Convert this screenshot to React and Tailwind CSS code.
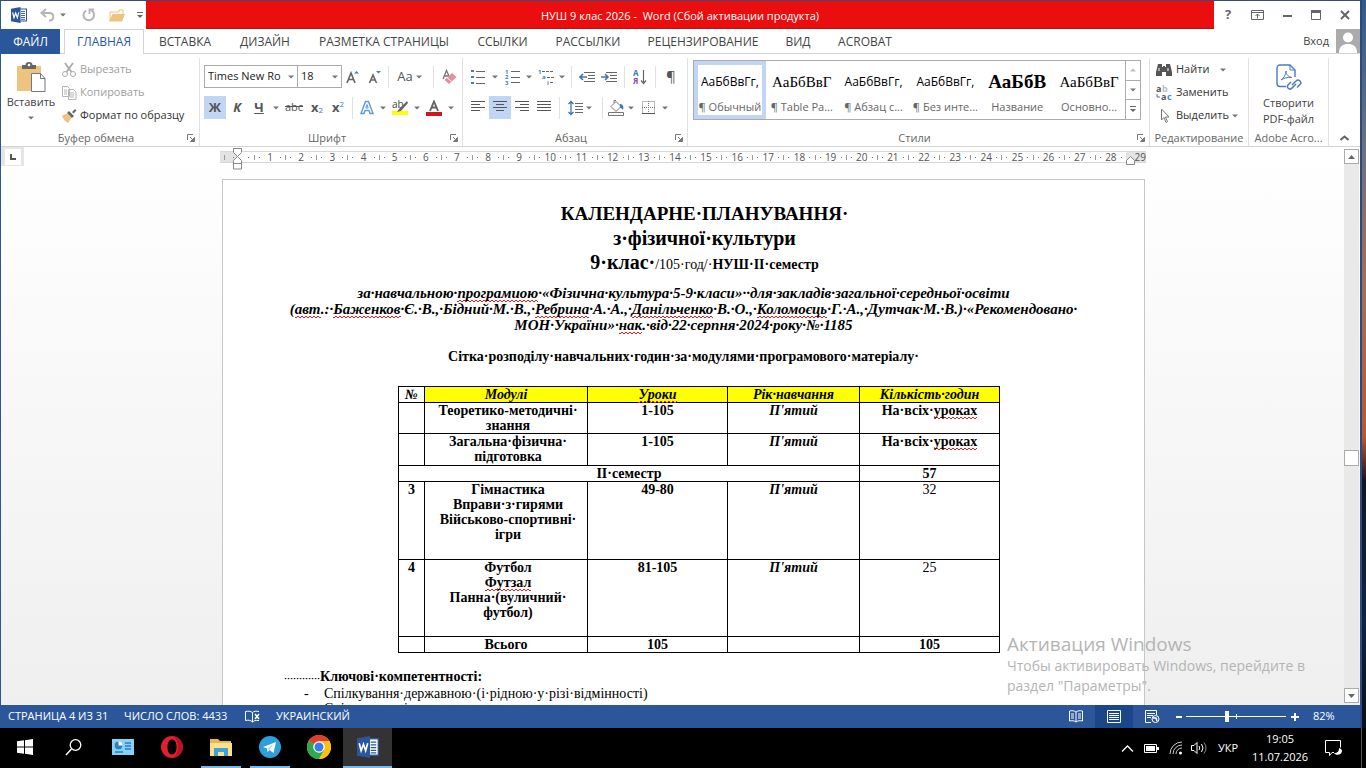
const Svg = ({w = 16, h = 16, children, className = ""}) => (
    <svg width={w} height={h} viewBox={`0 0 ${w} ${h}`} fill="none" className={`shrink-0 ${className}`} aria-hidden="true">
        {children}
    </svg>
)

const Arrow = ({className = "w-3"}) => (
    <span className={`flex justify-center shrink-0 ${className}`}>
        <Svg w={6} h={4}><path d="M0 0.5h6L3 3.5z" fill="#777"/></Svg>
    </span>
)

const Sep = () => <span className="w-px h-[22px] bg-[#e1e1e1] shrink-0"/>

const Tool = ({label, active, className = "w-[22px]", children}) => (
    <button
        type="button"
        aria-label={label}
        className={`h-[23px] flex items-center justify-center shrink-0 ${active ? "bg-[#c2d5f2]" : ""} ${className}`}
    >
        {children}
    </button>
)

const Lines = ({rows}) => (
    <Svg w={14} h={13}>
        {rows.map(([x, w], i) => <rect key={i} x={x} y={i * 3} width={w} height="1" fill="#555"/>)}
    </Svg>
)

const Group = ({title, launcher, className = "", children}) => (
    <section className={`flex flex-col border-r border-[#e1e1e1] mt-1 ${className}`}>
        <div className="h-[73px]">{children}</div>
        <div className="flex items-center h-[14px] px-1 text-[11px] text-[#666]">
            <span className="flex-1 text-center whitespace-nowrap">{title}</span>
            {launcher && (
                <button type="button" aria-label={`${title}: параметры`}>
                    <Svg w={8} h={8}>
                        <path d="M0.5 6V0.5H6" stroke="#777"/>
                        <path d="M3 3l3 3M7.5 3.5v4h-4z" stroke="#777" fill="#777"/>
                    </Svg>
                </button>
            )}
        </div>
    </section>
)

const TABS = [
    {title: "ВСТАВКА", width: "w-[82px]"},
    {title: "ДИЗАЙН", width: "w-[78px]"},
    {title: "РАЗМЕТКА СТРАНИЦЫ", width: "w-40"},
    {title: "ССЫЛКИ", width: "w-[77px]"},
    {title: "РАССЫЛКИ", width: "w-[94px]"},
    {title: "РЕЦЕНЗИРОВАНИЕ", width: "w-[136px]"},
    {title: "ВИД", width: "w-[54px]"},
    {title: "ACROBAT", width: "w-20"},
]

const SANS = "font-['Open_Sans',sans-serif] text-xs"
const SERIF = "font-['Liberation_Serif',serif] text-[15px]"

const STYLES = [
    {sample: "АаБбВвГг,", name: "¶ Обычный", font: SANS, active: true},
    {sample: "АаБбВвГ", name: "¶ Table Pa...", font: SERIF},
    {sample: "АаБбВвГг,", name: "¶ Абзац с...", font: SANS},
    {sample: "АаБбВвГг,", name: "¶ Без инте...", font: SANS},
    {sample: "АаБбВ", name: "Название", font: "font-['Liberation_Serif',serif] text-[19px] font-bold"},
    {sample: "АаБбВвГ", name: "Основно...", font: SERIF},
]

const WordLogo = ({size = 16}) => (
    <svg width={size} height={size} viewBox="0 0 16 16" aria-hidden="true">
        <rect x="8.5" y="2" width="7" height="12" fill="#fff" stroke="#2b579a"/>
        <path d="M10 4.5h4M10 6.5h4M10 8.5h4M10 10.5h4M10 12.3h4" stroke="#2b579a" strokeWidth="0.9"/>
        <path d="M0 1.7L9.5 0v16L0 14.3z" fill="#2b579a"/>
        <path d="M1.6 5.3l1.4 5.4L4.7 6l1.6 4.7 1.5-5.4" stroke="#fff" strokeWidth="1.2" fill="none"/>
    </svg>
)

const TitleBar = () => (
    <header className="flex h-[29px] border-t border-[#3b4a78] text-xs">
        <div className="flex items-center w-[145px] pl-[10px] bg-white">
            <WordLogo/>
            <button type="button" aria-label="Отменить" className="ml-[13px]">
                <Svg w={15} h={14}>
                    <path d="M6 1L1.5 5 6 9M2 5h7.5c5 0 5 7.5 0 7.5H9" stroke="#b5b5b5" strokeWidth="2"/>
                </Svg>
            </button>
            <Arrow className="w-4"/>
            <button type="button" aria-label="Повторить" className="ml-[10px]">
                <Svg w={15} h={14}>
                    <path d="M5 2.5A5.3 5.3 0 1 0 10 2.2" stroke="#b5b5b5" strokeWidth="2"/>
                    <path d="M8.5 6V1.5H13" stroke="#b5b5b5" strokeWidth="1.8"/>
                </Svg>
            </button>
            <button type="button" aria-label="Открыть" className="ml-[13px]">
                <Svg w={16} h={13}>
                    <path d="M1 12V3h9V1h4v5" fill="#fff" stroke="#e9c27c"/>
                    <path d="M0 12.5L3.5 5H16l-3 7.5z" fill="#ecc480"/>
                </Svg>
            </button>
            <button type="button" aria-label="Настройка панели" className="ml-3">
                <Svg w={6} h={7}><path d="M0 0.5h6" stroke="#666"/><path d="M0 3h6L3 6z" fill="#666"/></Svg>
            </button>
        </div>
        <h1 className="flex-1 flex items-center justify-center whitespace-pre bg-[#ea0e0e] border-b border-[#b01515] text-white text-[11px] pt-[3px]">
            {"НУШ 9 клас 2026 -  Word (Сбой активации продукта)"}
        </h1>
        <div className="flex items-center justify-between w-[146px] px-[10px] bg-white">
            <button type="button" aria-label="Справка" className="text-[13px] w-2 font-bold text-[#666]">?</button>
            <button type="button" aria-label="Параметры ленты">
                <Svg w={13} h={10}>
                    <path d="M0.5 0.5h12v9H0.5zM0.5 2.5h12" stroke="#666"/>
                    <path d="M6.5 8.5V4M4.5 6l2-2 2 2" stroke="#666"/>
                </Svg>
            </button>
            <button type="button" aria-label="Свернуть"><Svg w={9} h={10}><path d="M0 6h9" stroke="#666" strokeWidth="2"/></Svg></button>
            <button type="button" aria-label="Развернуть">
                <Svg w={10} h={10}><path d="M0.5 0.5h9v9h-9z" stroke="#666"/><path d="M0 1.5h10" stroke="#666" strokeWidth="3"/></Svg>
            </button>
            <button type="button" aria-label="Закрыть">
                <Svg w={10} h={10}><path d="M1 1l8 8M9 1L1 9" stroke="#666" strokeWidth="2"/></Svg>
            </button>
        </div>
    </header>
)

const TabBar = () => (
    <nav className="flex h-[25px] bg-white text-xs text-[#444]">
        <button type="button" className="w-[59px] pt-px bg-[#2b579a] text-white">ФАЙЛ</button>
        <span className="w-1 border-b border-[#d4d4d4]"/>
        <button type="button" className="w-20 text-[#2b579a] border border-b-0 border-[#d4d4d4]">ГЛАВНАЯ</button>
        {TABS.map((tab) => (
            <button type="button" key={tab.title} className={`pt-[2px] border-b border-[#d4d4d4] whitespace-nowrap ${tab.width}`}>
                {tab.title}
            </button>
        ))}
        <div className="flex-1 flex items-center justify-end gap-[7px] border-b border-[#d4d4d4]">
            <a href="#login" className="text-[11px]">Вход</a>
            <Svg w={24} h={24}>
                <path d="M0 0h24v24H0z" fill="#ababab"/>
                <circle cx="12" cy="8.5" r="5" fill="#fff"/>
                <path d="M3 24c0-7 4-9 9-9s9 2 9 9z" fill="#fff"/>
            </Svg>
        </div>
    </nav>
)

const Clipboard = () => (
    <Group title="Буфер обмена" launcher className="w-[199px]">
        <div className="flex">
            <button type="button" className="flex flex-col items-center w-[60px] pt-1 text-[11px]">
                <Svg w={29} h={30}>
                    <path d="M0 4h24v25H0z" fill="#ecc480"/>
                    <path d="M5 3h3.5a3.5 3 0 0 1 7 0H19v4H5z" fill="#666"/>
                    <circle cx="12" cy="3" r="1.3" fill="#fff"/>
                    <path d="M14.5 11.5h9l4.5 5v13H14.5z" fill="#fff" stroke="#777"/>
                    <path d="M23.5 11.5v5H28" stroke="#777"/>
                </Svg>
                <span className="leading-5">Вставить</span>
                <span className="pt-1"><Arrow/></span>
            </button>
            <div className="flex flex-col text-[11px]">
                <button type="button" className="flex items-center gap-[3px] h-[23px] text-[#a0a0a0]">
                    <Svg>
                        <path d="M4 1l6.5 9M12 1L5.500 10" stroke="#aaa" strokeWidth="1.8"/>
                        <circle cx="4" cy="12" r="2.5" stroke="#aaa"/><circle cx="12" cy="12" r="2.5" stroke="#aaa"/>
                    </Svg>
                    Вырезать
                </button>
                <button type="button" className="flex items-center gap-[3px] h-[23px] text-[#a0a0a0]">
                    <Svg>
                        <path d="M1.5 1.5h5l2 2v8h-7zM7.5 4.5h5l2.5 2.5v7.5H7.5z" fill="#fff" stroke="#b5b5b5"/>
                        <path d="M3 5h3M3 7h3M3 9h3M9 8h4M9 10h4M9 12h4" stroke="#b5b5b5"/>
                    </Svg>
                    Копировать
                </button>
                <button type="button" className="flex items-center gap-[3px] h-[23px] text-[#333]">
                    <Svg>
                        <path d="M1 7.5l5-2 4.5 4.500L7 15C4 13.5 2 11 1 7.5z" fill="#ecc480"/>
                        <path d="M6 5l2-2 5 5-2 2zM11 4l3-3 1.5 1.5-3 3z" fill="#666"/>
                    </Svg>
                    Формат по образцу
                </button>
            </div>
        </div>
    </Group>
)

const FontGroup = () => (
    <Group title="Шрифт" launcher className="w-[263px]">
        <div className="flex items-center h-[23px] mt-[7px] ml-1">
            <div className="flex items-center w-[94px] h-[23px] border border-[#ababab]">
                <input aria-label="Шрифт" defaultValue="Times New Ro" className="min-w-0 flex-1 pl-[3px] text-[11px] text-[#222] outline-none"/>
                <Arrow/>
            </div>
            <div className="flex items-center w-11 h-[23px] border border-l-0 border-[#ababab]">
                <input aria-label="Размер шрифта" defaultValue="18" className="min-w-0 flex-1 pl-[3px] text-[11px] text-[#222] outline-none"/>
                <Arrow/>
            </div>
            <Tool label="Увеличить размер">
                <Svg w={14} h={14}>
                    <path d="M1 13L5 3l4 10M2.5 9.5h5" stroke="#666" strokeWidth="1.6"/><path d="M8 3.5h5L10.5 1z" fill="#4a7ab5"/>
                </Svg>
            </Tool>
            <Tool label="Уменьшить размер">
                <Svg w={14} h={14}>
                    <path d="M1.5 13L5 5l3.500 8M3 10h4.5" stroke="#666" strokeWidth="1.6"/><path d="M8 1h5l-2.5 2.5z" fill="#4a7ab5"/>
                </Svg>
            </Tool>
            <div className="flex items-center gap-1 ml-[2px]">
                <Sep/>
                <Tool label="Регистр" className="w-9 text-[13px] text-[#555]">Aa<Arrow/></Tool>
                <Sep/>
                <Tool label="Очистить формат">
                    <Svg>
                        <path d="M2 10L5.5 1.5 8 7M3.5 7h4" stroke="#777" strokeWidth="1.3"/>
                        <path d="M3.5 11l7.5-7 4.5 4-7.5 7z" fill="#e58e9c"/><path d="M6 8.500l4.5 4" stroke="#fff"/>
                    </Svg>
                </Tool>
            </div>
        </div>
        <div className="flex items-center h-[23px] mt-2 ml-1 text-[13px] text-[#555]">
            <Tool label="Полужирный" active><b>Ж</b></Tool>
            <Tool label="Курсив"><b className="italic">К</b></Tool>
            <Tool label="Подчеркнутый"><b className="underline">Ч</b></Tool>
            <Arrow/>
            <Tool label="Зачеркнутый" className="w-6 text-[11px]"><s>abc</s></Tool>
            <Tool label="Подстрочный"><b>x</b><sub className="text-[8px] text-[#4a7ab5]">2</sub></Tool>
            <Tool label="Надстрочный" className="w-5"><b>x</b><sup className="text-[8px] text-[#4a7ab5]">2</sup></Tool>
            <div className="flex items-center ml-1">
                <Sep/>
                <Tool label="Текстовые эффекты" className="w-7">
                    <Svg w={14} h={15}>
                        <path d="M1 13.5L5.5 1.5h3L13 13.5h-3L9 10.5H5l-1 3z" stroke="#5b9bd5" strokeWidth="1.4" fill="#fff"/>
                        <path d="M7 4.5L5.800 8h2.4z" stroke="#5b9bd5"/>
                    </Svg>
                </Tool>
                <Arrow className="w-1"/>
                <Tool label="Цвет выделения" className="w-[30px]">
                    <Svg w={17} h={17}>
                        <path d="M0 12h16v4H0z" fill="#ffff00"/>
                        <text x="0" y="9" fontSize="10" fill="#444" fontFamily="Open Sans">ab</text>
                        <path d="M15 2l-8 8-2 3 4-1 7-8z" fill="#666"/>
                    </Svg>
                </Tool>
                <Arrow className="w-1"/>
                <Tool label="Цвет текста" className="w-[30px]">
                    <Svg w={16} h={16}>
                        <path d="M0 12h16v4H0z" fill="#d01818"/><path d="M4 11L8 1.5l4 9.5M5.5 7.5h5" stroke="#666" strokeWidth="1.9"/>
                    </Svg>
                </Tool>
                <Arrow className="w-1"/>
            </div>
        </div>
    </Group>
)

const ParagraphGroup = () => (
    <Group title="Абзац" launcher className="w-[225px]">
        <div className="flex items-center h-[23px] mt-[7px] ml-1">
            <Tool label="Маркеры">
                <Svg w={14} h={15}>
                    <path d="M0 1h3v2H0zM0 7h3v2H0zM0 13h3v2H0z" fill="#4a7ab5"/><path d="M5 2.5h9M5 8.5h9M5 14.5h9" stroke="#666"/>
                </Svg>
            </Tool>
            <Arrow/>
            <Tool label="Нумерация">
                <Svg w={15} h={16}>
                    <g fontSize="6" fontWeight="bold" fill="#4a7ab5" fontFamily="Open Sans">
                        <text x="0" y="5">1</text><text x="0" y="10">2</text><text x="0" y="16">3</text>
                    </g>
                    <path d="M6 2.5h9M6 8.5h9M6 13.5h9" stroke="#666"/>
                </Svg>
            </Tool>
            <Arrow/>
            <Tool label="Многоуровневый список">
                <Svg w={17} h={16}>
                    <g fontSize="6" fontWeight="bold" fill="#4a7ab5" fontFamily="Open Sans">
                        <text x="0" y="5">1</text><text x="4" y="10">a</text><text x="9" y="16">i</text>
                    </g>
                    <path d="M4 2.5h12M9 8.5h7M12 13.5h4" stroke="#666" strokeDasharray="3 1"/>
                </Svg>
            </Tool>
            <Arrow className="w-[10px]"/>
            <div className="flex items-center gap-1 ml-1">
                <Sep/>
                <div className="flex">
                    <Tool label="Уменьшить отступ">
                        <Svg w={16} h={12}>
                            <path d="M5 1.5h11M9 4.5h7M9 7.5h7M5 10.5h11" stroke="#666"/><path d="M8 6H1M4 3L1 6l3 3" stroke="#3f76b5" strokeWidth="1.6"/>
                        </Svg>
                    </Tool>
                    <Tool label="Увеличить отступ">
                        <Svg w={16} h={12}>
                            <path d="M5 1.5h11M9 4.5h7M9 7.5h7M5 10.5h11" stroke="#666"/><path d="M0 6h7M4 3l3 3-3 3" stroke="#3f76b5" strokeWidth="1.6"/>
                        </Svg>
                    </Tool>
                </div>
                <Sep/>
                <Tool label="Сортировка">
                    <Svg w={14} h={16}>
                        <g fontSize="8" fontWeight="bold" fontFamily="Open Sans">
                            <text x="0" y="7" fill="#3f76b5">А</text><text x="0" y="15" fill="#8d4bab">Я</text>
                        </g>
                        <path d="M10.5 1v13M8 11.5l2.5 3 2.5-3" stroke="#666" strokeWidth="1.2"/>
                    </Svg>
                </Tool>
                <Sep/>
                <Tool label="Знаки абзаца" className="w-[22px] text-[15px] text-[#555]">¶</Tool>
            </div>
        </div>
        <div className="flex items-center h-[23px] mt-2 ml-1">
            <Tool label="По левому краю"><Lines rows={[[0, 14], [0, 9], [0, 14], [0, 9]]}/></Tool>
            <Tool label="По центру" active><Lines rows={[[0, 14], [3, 8], [0, 14], [3, 8]]}/></Tool>
            <Tool label="По правому краю"><Lines rows={[[0, 14], [5, 9], [0, 14], [5, 9]]}/></Tool>
            <Tool label="По ширине"><Lines rows={[[0, 14], [0, 14], [0, 14], [0, 14]]}/></Tool>
            <div className="flex items-center gap-[3px] ml-1">
                <Sep/>
                <Tool label="Интервал" className="w-9">
                    <Svg w={15} h={16}>
                        <path d="M3 2v12M0.5 4L3 1.5 5.5 4M0.5 12L3 14.5 5.5 12" stroke="#3f76b5" strokeWidth="1.3"/>
                        <path d="M7 3.5h8M7 6.5h8M7 9.5h8M7 12.5h8" stroke="#666"/>
                    </Svg>
                    <Arrow/>
                </Tool>
                <Sep/>
                <Tool label="Заливка" className="w-[33px]">
                    <Svg w={17} h={16}>
                        <path d="M3 6.5l5-5 5 5-5 5z" stroke="#777" fill="#fff"/><path d="M6 3V0.5h2" stroke="#777"/>
                        <path d="M12 4c3 0 4 3 3 6-1-2-3-2-3-2z" fill="#3f76b5"/>
                        <path d="M0.5 12.5h15v3H0.5z" stroke="#777" fill="#fff"/>
                    </Svg>
                    <Arrow/>
                </Tool>
                <Tool label="Границы" className="w-7">
                    <Svg w={13} h={13}>
                        <path d="M0.5 0.5h12v12H0.5zM6.5 0v13M0 6.5h13" stroke="#777" strokeDasharray="1 1"/>
                        <path d="M0 12.5h13" stroke="#555"/>
                    </Svg>
                    <Arrow className="w-4 pl-1"/>
                </Tool>
            </div>
        </div>
    </Group>
)

const StylesGroup = () => (
    <Group title="Стили" launcher className="flex-1">
        <div className="flex h-[60px] mt-[2px] ml-[5px] mr-2 border border-[#ababab]">
            {STYLES.map((style, index) => (
                <button
                    type="button"
                    key={index}
                    className={`flex flex-col flex-1 min-w-0 items-center whitespace-nowrap ${style.active ? "border-4 border-[#c2d5f2]" : "p-1"}`}
                >
                    <span className={`h-[34px] flex items-center text-black ${style.font}`}>{style.sample}</span>
                    <span className="text-[11px] leading-4 text-[#666]">{style.name}</span>
                </button>
            ))}
            <div className="flex flex-col w-[15px] border-l border-[#ababab]">
                <button type="button" aria-label="Вверх" className="flex-1 flex items-center justify-center">
                    <Svg w={6} h={4}><path d="M0 3.5h6L3 0.5z" fill="#bbb"/></Svg>
                </button>
                <button type="button" aria-label="Вниз" className="flex-1 flex items-center border-y border-[#ababab]"><Arrow className="w-[14px]"/></button>
                <button type="button" aria-label="Все стили" className="flex-1 flex items-center justify-center">
                    <Svg w={6} h={7}><path d="M0 0.5h6" stroke="#666"/><path d="M0 3h6L3 6z" fill="#666"/></Svg>
                </button>
            </div>
        </div>
    </Group>
)

const EditGroup = () => (
    <Group title="Редактирование" className="w-[99px]">
        <div className="flex flex-col pl-[6px] text-[11px] text-[#333]">
            <button type="button" className="flex items-center gap-1 h-[23px]">
                <Svg w={16} h={14}>
                    <path d="M2 1h4v3h1V3h2v1h1V1h4l2 8v4h-6V9H6v4H0V9z" fill="#555"/><path d="M3 5v3M12 5v3" stroke="#fff"/>
                </Svg>
                Найти
                <Arrow className="w-5"/>
            </button>
            <button type="button" className="flex items-center gap-1 h-[23px]">
                <Svg w={16} h={16}>
                    <g fontSize="9" fontWeight="bold" fontFamily="Open Sans">
                        <text x="0" y="7" fill="#555">a</text><text x="6" y="7" fill="#bbb">b</text>
                        <text x="5" y="15" fill="#555">a</text><text x="11" y="15" fill="#4a8ac5">c</text>
                    </g>
                    <path d="M1 9v3h3" stroke="#3f76b5"/>
                </Svg>
                Заменить
            </button>
            <button type="button" className="flex items-center gap-1 h-[23px]">
                <Svg w={16} h={15}><path d="M5.5 1v11l2.5-2.5 2 5 1.5-1-2-4.5H13z" stroke="#777" fill="#fff"/></Svg>
                Выделить
                <Arrow className="w-1"/>
            </button>
        </div>
    </Group>
)

const Ribbon = () => (
    <div className="flex h-[93px] bg-white border-b border-[#d4d4d4]">
        <Clipboard/>
        <FontGroup/>
        <ParagraphGroup/>
        <StylesGroup/>
        <EditGroup/>
        <Group title="Adobe Acro..." className="w-20">
            <button type="button" className="flex flex-col items-center w-full pt-[6px] text-[11px] leading-4 text-[#444]">
                <Svg w={26} h={28}>
                    <path d="M10 22.5H4a3 3 0 0 1-3-3V4a3 3 0 0 1 3-3h10l5 5v7" stroke="#4a7cc4" strokeWidth="1.4"/>
                    <path d="M14 1v5h5" stroke="#4a7cc4"/>
                    <path d="M5 16c3-2 5-6 5-9M10 7c0 4 3 6 6 6.5M5 16c3-2 7-3 10-2.5" stroke="#4a7cc4"/>
                    <path d="M16 21l4-4a2.5 2.5 0 0 1 4 3.5l-3 3M20 20l-4 4a2.5 2.5 0 0 1-4-3l3-3" stroke="#4a7cc4" strokeWidth="1.5"/>
                </Svg>
                <span className="pt-[3px]">Створити<br/>PDF-файл</span>
            </button>
        </Group>
        <button type="button" aria-label="Свернуть ленту" className="flex items-end justify-center w-[31px] pb-[5px]">
            <Svg w={9} h={6}><path d="M0.5 5L4.5 1.5 8.5 5" stroke="#666" strokeWidth="2"/></Svg>
        </button>
    </div>
)

const CENTIMETERS = Array.from({length: 28}, (_, i) => i + 1)

const Tick = () => <span className="w-px h-[5px] bg-[#999]"/>
const Dot = () => <span className="w-px h-px bg-[#777]"/>

const Ruler = () => (
    <div className="flex w-[926px] h-3 border-y border-[#d8d8d8] text-[10px] text-[#555] bg-white">
        <div className="relative flex items-center justify-around w-[18px] bg-[#e3e3e3]">
            <Tick/><Dot/>
            <Svg w={9} h={22} className="absolute -right-1 -top-1 z-10">
                <path d="M0.5 0.5h8v4L4.5 8.5 0.5 4.5zM4.5 8.5l4 4v3h-8v-3zM0.5 15.5h8v5.5h-8z" fill="#fff" stroke="#888"/>
            </Svg>
        </div>
        <div className="flex items-center justify-around w-4 pl-1"><Dot/></div>
        <div className="flex flex-1">
            {CENTIMETERS.map((cm) => (
                <div key={cm} className="flex flex-1 items-center justify-between">
                    <Tick/>
                    <Dot/>
                    <span className="w-3 flex justify-center leading-none">{cm}</span>
                    <Dot/>
                    <span/>
                </div>
            ))}
        </div>
        <div className="relative flex items-center justify-end w-5 bg-[#e3e3e3] leading-none">
            <Svg w={9} h={9} className="absolute left-0 top-1"><path d="M0.5 8.5v-4l4-4 4 4v4z" fill="#fff" stroke="#888"/></Svg>
            29
        </div>
    </div>
)

// spell-check squiggle: two rows of dashes, shifted by half a period
const Err = ({children}) => (
    <span className="pb-px bg-[linear-gradient(90deg,#e02020_50%,transparent_50%),linear-gradient(90deg,transparent_50%,#e02020_50%)] bg-[length:4px_1px] bg-[position:0_100%,0_calc(100%-1px)] bg-repeat-x">
        {children}
    </span>
)

const MODULES = [
    {height: "h-[31px]", number: "", module: <>Теоретико-методичні·<br/>знання</>, lessons: "1-105", hours: <b>На·всіх·<Err>уроках</Err></b>},
    {height: "h-8", number: "", module: <>Загальна·фізична·<br/>підготовка</>, lessons: "1-105", hours: <b>На·всіх·<Err>уроках</Err></b>},
]

const SEMESTER = [
    {height: "h-[78px]", number: "3", module: <>Гімнастика<br/>Вправи·з·гирями<br/>Військово-спортивні·<br/>ігри</>, lessons: "49-80", hours: "32"},
    {height: "h-[77px]", number: "4", module: <>Футбол<br/><Err>Футзал</Err><br/>Панна·(вуличний·<br/>футбол)</>, lessons: "81-105", hours: "25"},
]

const CELL = "border border-black p-0"

const Row = ({item}) => (
    <tr className={`align-top ${item.height}`}>
        <td className={`${CELL} font-bold`}>{item.number}</td>
        <td className={`${CELL} font-bold pl-1`}>{item.module}</td>
        <td className={`${CELL} font-bold`}>{item.lessons}</td>
        <td className={`${CELL} font-bold italic`}>П'ятий</td>
        <td className={CELL}>{item.hours}</td>
    </tr>
)

const HoursTable = () => (
    <table className="w-[602px] ml-[175px] mt-[21px] table-fixed border-collapse text-center text-[14px] leading-[15px]">
        <colgroup>
            <col className="w-[26px]"/>
            <col className="w-[163px]"/>
            <col className="w-[140px]"/>
            <col className="w-[132px]"/>
            <col className="w-[140px]"/>
        </colgroup>
        <thead className="italic">
            <tr>
                <th className={CELL}>№</th>
                <th className={`${CELL} bg-[#ffff00]`}>Модулі</th>
                <th className={`${CELL} bg-[#ffff00]`}><Err>Уроки</Err></th>
                <th className={`${CELL} bg-[#ffff00]`}>Рік·навчання</th>
                <th className={`${CELL} bg-[#ffff00]`}>Кількість·годин</th>
            </tr>
        </thead>
        <tbody>
            {MODULES.map((item, index) => <Row key={index} item={item}/>)}
            <tr className="font-bold">
                <td colSpan={4} className={CELL}>ІІ·семестр</td>
                <td className={CELL}>57</td>
            </tr>
            {SEMESTER.map((item) => <Row key={item.number} item={item}/>)}
            <tr className="font-bold">
                <td className={CELL}/>
                <td className={CELL}>Всього</td>
                <td className={CELL}>105</td>
                <td className={CELL}/>
                <td className={CELL}>105</td>
            </tr>
        </tbody>
    </table>
)

const Page = () => (
    <article className="w-[923px] shrink-0 h-full overflow-hidden pt-[22px] bg-white border border-b-0 border-[#c6c6c6] text-black whitespace-nowrap font-['Liberation_Serif',serif]">
        <div className="pl-[42px] text-center text-[20px] leading-6 font-bold">
            <h2 className="text-[19px]">КАЛЕНДАРНЕ·ПЛАНУВАННЯ·</h2>
            <h2>з·фізичної·культури</h2>
            <p>9·клас·<span className="text-[14px] font-normal">/105·год/·</span><span className="text-[14px]">НУШ·ІІ·семестр</span></p>
        </div>
        <p className="mt-2 text-center text-[15px] leading-4 font-bold italic">
            за·навчальною·<Err>програмиою</Err>·«Фізична·культура·5-9·класи»··для·закладів·загальної·середньої·освіти<br/>
            (<Err>авт</Err>.:·<Err>Баженков</Err>·Є.·В.,·Бідний·М.·В.,·<Err>Ребрина</Err>·А.·А.,·<Err>Данільченко</Err>·В.·О.,·<Err>Коломоєць</Err>·Г.·А.,·Дутчак·М.·В.)·«Рекомендовано·<br/>
            МОН·України»·<Err>нак</Err>.·від·22·серпня·2024·року·№·1185
        </p>
        <p className="mt-4 text-center text-[14px] leading-4 font-bold">
            Сітка·розподілу·навчальних·годин·за·модулями·програмового·матеріалу·
        </p>
        <HoursTable/>
        <div className="mt-4 ml-[61px] text-[14px] leading-[15px]">
            <p className="font-bold"><span className="text-[9px]">············</span>Ключові·компетентності:</p>
            <ul className="ml-5">
                <li className="flex"><span className="w-5">-</span>Спілкування·державною·(і·рідною·у·різі·відмінності)</li>
                <li className="flex"><span className="w-5">-</span>Спілкування·іноземними·мовами</li>
            </ul>
        </div>
    </article>
)

const Scrollbar = () => (
    <div className="flex flex-col items-center w-[17px]">
        <button type="button" aria-label="Прокрутить вверх" className="flex items-center justify-center w-[15px] h-[15px] mt-[2px] bg-white border border-[#ababab]">
            <Svg w={7} h={4}><path d="M0 4h7L3.5 0z" fill="#666"/></Svg>
        </button>
        <div className="flex-1 flex flex-col justify-center pt-16 bg-[#e9e9e9]">
            <span className="w-[15px] h-4 bg-white border border-[#ababab]"/>
        </div>
        <button type="button" aria-label="Прокрутить вниз" className="flex items-center justify-center w-[15px] h-[15px] mb-[2px] bg-white border border-[#ababab]">
            <Svg w={7} h={4}><path d="M0 0h7L3.5 4z" fill="#666"/></Svg>
        </button>
    </div>
)

const Workspace = () => (
    <main className="flex flex-1 min-h-0 bg-linear-to-b from-white to-[#efefef]">
        <div className="flex flex-col flex-1 min-w-0">
            <div className="flex h-8 pt-1">
                <div className="flex flex-[219] min-w-0">
                    <span className="flex items-center justify-center w-[23px] h-[19px] -mt-1 bg-[#e6e6e6]">
                        <span className="flex items-center justify-center w-4 h-4 bg-white">
                            <Svg w={6} h={6}><path d="M1 0v5h5" stroke="#555" strokeWidth="2"/></Svg>
                        </span>
                    </span>
                </div>
                <Ruler/>
                <div className="flex-[197]"/>
            </div>
            <div className="flex flex-1 min-h-0">
                <div className="flex-[221]"/>
                <Page/>
                <div className="flex-[198]"/>
            </div>
        </div>
        <Scrollbar/>
    </main>
)

const StatusBar = () => (
    <footer className="flex items-center h-[23px] bg-[#2b579a] text-white text-[11px]">
        <span className="w-[116px] pl-[7px]">СТРАНИЦА 4 ИЗ 31</span>
        <span className="w-[120px] pl-[7px]">ЧИСЛО СЛОВ: 4433</span>
        <Svg w={15} h={13} className="ml-2">
            <path d="M7.5 2.5C5.5 1 3 1 0.5 1.5v9c3-.5 5-.5 7 1.5zM7.5 2.5C9 1 11 1 14 1.5M7.5 12c1-1 3-2 6.5-1.5" stroke="#fff"/>
            <path d="M10 4l4 5M14 4l-4 5" stroke="#fff" strokeWidth="1.5"/>
        </Svg>
        <span className="flex-1 pl-4">УКРАИНСКИЙ</span>
        <div className="flex items-center h-full">
            <button type="button" aria-label="Режим чтения" className="w-[38px] flex justify-center">
                <Svg w={14} h={13}>
                    <path d="M7 2C5 .5 3 .5 0.5 1v10c2.5-.5 4.5-.5 6.5 1 2-1.5 4-1.5 6.5-1V1C11 .5 9 .5 7 2zM7 2v10M2 4h3M2 6h3M2 8h3M9 4h3M9 6h3M9 8h3" stroke="#fff"/>
                </Svg>
            </button>
            <button type="button" aria-label="Разметка страницы" className="w-[38px] h-full flex items-center justify-center bg-[#19478a]">
                <Svg w={14} h={13}><path d="M0.5 0.5h13v12h-13zM2 3.5h10M2 5.5h10M2 7.5h10M2 9.5h10" stroke="#fff"/></Svg>
            </button>
            <button type="button" aria-label="Веб-документ" className="w-[38px] flex justify-center">
                <Svg w={15} h={13}>
                    <path d="M6 12.5H0.5v-12h11V5M2 3.5h8M2 5.5h6M2 7.5h4" stroke="#fff"/>
                    <circle cx="10.5" cy="9" r="3.5" stroke="#fff"/><path d="M8 8h3l1 3" stroke="#fff" strokeWidth="1.5"/>
                </Svg>
            </button>
            <button type="button" aria-label="Уменьшить" className="w-[15px] flex justify-center"><Svg w={6} h={2}><path d="M0 0h6v2H0z" fill="#fff"/></Svg></button>
            <input
                type="range"
                aria-label="Масштаб"
                min="0"
                max="100"
                defaultValue="41"
                className="appearance-none w-[100px] h-3 bg-transparent bg-[linear-gradient(#fff,#fff),linear-gradient(#fff,#fff)] bg-[length:100%_1px,1px_5px] bg-center bg-no-repeat [&::-webkit-slider-thumb]:appearance-none [&::-webkit-slider-thumb]:w-1 [&::-webkit-slider-thumb]:h-[11px] [&::-webkit-slider-thumb]:bg-white"
            />
            <button type="button" aria-label="Увеличить" className="w-[17px] flex justify-center"><Svg w={8} h={8}><path d="M3 0h2v3h3v2H5v3H3V5H0V3h3z" fill="#fff"/></Svg></button>
            <span className="w-[57px] pl-[10px]">82%</span>
        </div>
    </footer>
)

const TaskButton = ({label, running, active, children}) => (
    <button type="button" aria-label={label} className={`flex flex-col items-center w-[49px] h-10 ${active ? "bg-[#333]" : ""}`}>
        <span className="flex-1 flex items-center">{children}</span>
        <span className={`h-[2px] ${active ? "w-full" : "w-10"} ${running ? "bg-[#76b9ed]" : ""}`}/>
    </button>
)

const TaskBar = () => (
    <footer className="flex items-center h-10 bg-black text-white text-[11px]">
        <TaskButton label="Пуск">
            <Svg><path d="M0 2.3l7-1V7.5H0zM8 1.2L16 0v7.5H8zM0 8.5h7v6.2l-7-1zM8 8.5h8V16l-8-1.2z" fill="#fff"/></Svg>
        </TaskButton>
        <TaskButton label="Поиск">
            <Svg w={17} h={17}><circle cx="10.5" cy="6" r="5.3" stroke="#fff" strokeWidth="1.3"/><path d="M6.5 10L1 16" stroke="#fff" strokeWidth="1.5"/></Svg>
        </TaskButton>
        <TaskButton label="Панель управления">
            <Svg w={22} h={16}>
                <path d="M0 0h22v16H0z" fill="#8ad0f5"/><circle cx="6.5" cy="6.5" r="4" fill="#fff"/>
                <path d="M6.5 2.5a4 4 0 1 0 4 4h-4z" fill="#2680c4"/><path d="M13 4h6M13 7h6M13 10h6M3 13h8" stroke="#2680c4" strokeWidth="1.5"/>
            </Svg>
        </TaskButton>
        <TaskButton label="Opera">
            <Svg w={24} h={24}>
                <path fillRule="evenodd" d="M12 1a11 11 0 1 0 0 22 11 11 0 0 0 0-22zm0 3.5c3 0 4.5 3.5 4.5 7.5s-1.5 7.5-4.5 7.5S7.5 16 7.5 12 9 4.5 12 4.5z" fill="#e0202f"/>
                <path d="M12 1c6 0 11 5 11 11s-5 11-11 11c3 0 6-5 6-11s-3-11-6-11z" fill="#a70e1b" opacity=".6"/>
            </Svg>
        </TaskButton>
        <TaskButton label="Проводник" running>
            <Svg w={22} h={19}>
                <path d="M0 1h8l2 2h11v15H0z" fill="#e8b84a"/><path d="M0 5h22v13H0z" fill="#fde28a"/>
                <path d="M4 18v-8h14v8h-4v-4H8v4z" fill="#3fa0dc"/>
            </Svg>
        </TaskButton>
        <TaskButton label="Telegram" running>
            <Svg w={22} h={22}>
                <circle cx="11" cy="11" r="11" fill="#2ba0dc"/><path d="M4 11l13-5-2.5 11-4-3-2 2-.5-3.5z" fill="#fff"/><path d="M8 12.5L15 8l-5 6z" fill="#b5d8ee"/>
            </Svg>
        </TaskButton>
        <TaskButton label="Chrome">
            <Svg w={24} h={24}>
                <circle cx="12" cy="12" r="12" fill="#fbc116"/>
                <path d="M12 12L1.6 6A12 12 0 0 1 22.4 6z" fill="#e33b2e"/>
                <path d="M12 12L1.6 6A12 12 0 0 0 12 24l5.2-9z" fill="#2da94f"/>
                <path d="M12 12V6h10.4A12 12 0 0 1 12 24l5.2-9z" fill="#fbc116"/>
                <circle cx="12" cy="12" r="5.8" fill="#fff"/><circle cx="12" cy="12" r="4.5" fill="#3b7ded"/>
            </Svg>
        </TaskButton>
        <TaskButton label="Word" running active><WordLogo size={22}/></TaskButton>
        <div className="flex-1"/>
        <div className="flex items-center">
            <Svg w={13} h={7}><path d="M1 6.5L6.5 1 12 6.5" stroke="#fff" strokeWidth="1.3"/></Svg>
            <Svg w={15} h={9} className="ml-[10px]"><path d="M0.5 0.5h12v8H0.5z" stroke="#fff"/><path d="M2 2h9v5H2zM13 3h2v3h-2z" fill="#fff"/></Svg>
            <Svg w={14} h={14} className="ml-[10px]">
                <path d="M1 13A12 12 0 0 1 13 1M4 13a9 9 0 0 1 9-9M7 13a6 6 0 0 1 6-6" stroke="#ccc"/><circle cx="11.5" cy="12" r="1.5" fill="#fff"/>
            </Svg>
            <Svg w={16} h={14} className="ml-2">
                <path d="M0.5 4.5H3l3-3v11l-3-3H0.5z" stroke="#fff"/>
                <path d="M8 5q1.5 2 0 4M10.5 3q3 4 0 8" stroke="#fff"/><path d="M13 1.5q4 5.5 0 11" stroke="#888"/>
            </Svg>
            <span className="w-[42px] text-center">УКР</span>
            <span className="w-[62px] text-center leading-[18px]">19:05<br/>11.07.2026</span>
            <Svg w={17} h={16} className="ml-[14px]">
                <path d="M9 12.5H7l-2.5 3v-3h-4V0.5h15v7" stroke="#fff"/><path d="M14 8c0 3-1 5-5 5 2 3 8 2 8-2 0-1-1-2.5-3-3z" fill="#fff"/>
            </Svg>
            <span className="w-px h-10 ml-[19px] mr-1 bg-[#555]"/>
        </div>
    </footer>
)

export default function App() {
    return (
        <div className="relative flex flex-col h-screen overflow-hidden font-['Open_Sans',sans-serif] text-[#444]">
            <div className="flex flex-1 min-h-0">
                <div className="flex flex-col flex-1 min-w-0 border-l border-[#2b579a]">
                    <TitleBar/>
                    <TabBar/>
                    <Ribbon/>
                    <Workspace/>
                    <StatusBar/>
                </div>
                <div className="w-[6px] border-l-2 border-[#2b4a80] bg-[linear-gradient(#2e5c8c_0%,#6d7080_20%,#a0705a_40%,#b5583a_60%,#151520_66%,#10243f_85%,#0a0f18_100%)]"/>
            </div>
            <TaskBar/>
            <div className="absolute right-[57px] bottom-[72px] w-[302px] whitespace-nowrap text-[#b4b4b4] text-[14px] leading-5 pointer-events-none">
                <p className="text-[19px] leading-6">Активация Windows</p>
                <p>Чтобы активировать Windows, перейдите в<br/>раздел "Параметры".</p>
            </div>
        </div>
    )
}
